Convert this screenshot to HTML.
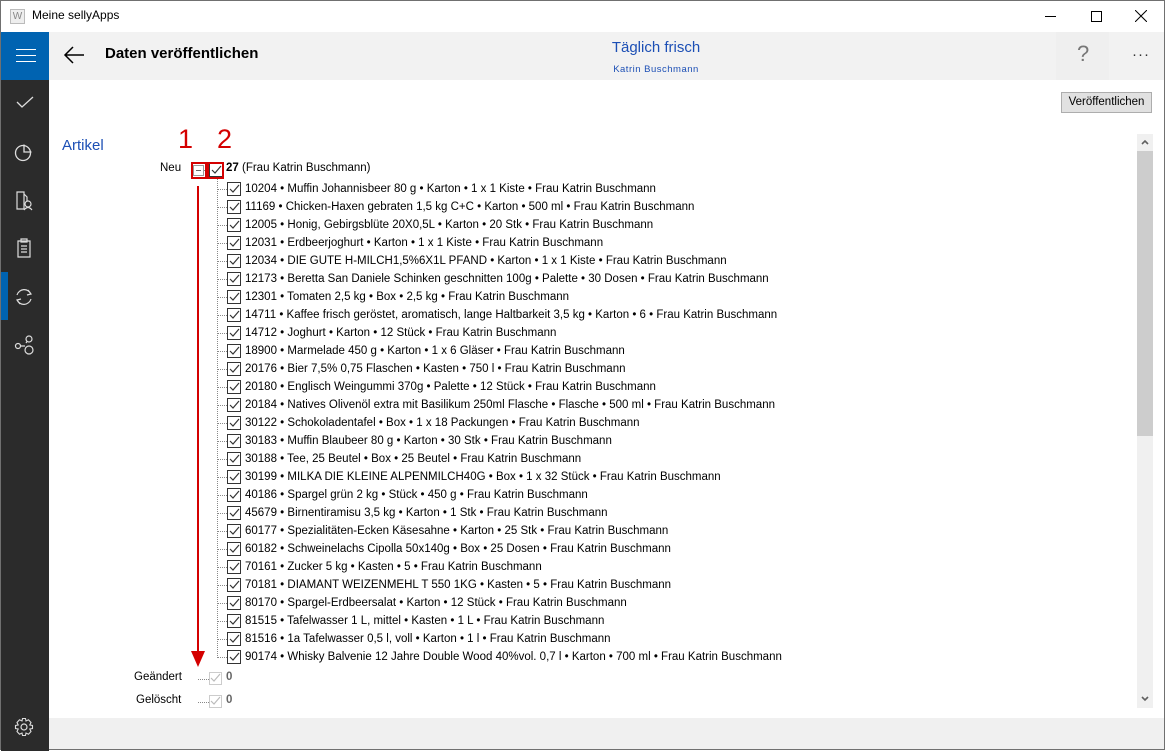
<!DOCTYPE html>
<html><head><meta charset="utf-8">
<style>
*{margin:0;padding:0;box-sizing:border-box}
body{width:1165px;height:750px;position:relative;overflow:hidden;background:#fff;font-family:"Segoe UI","Liberation Sans",sans-serif;border:1px solid #707070}
.a{position:absolute}
.row{position:absolute;left:226px;height:16px;font-size:11.5px;color:#000;white-space:nowrap;line-height:16px}
.cb{position:absolute;left:0;top:1px;width:14px;height:14px;border:1px solid #333;background:#fff}
.cb svg{position:absolute;left:1px;top:1px}
.row span{position:absolute;left:18px;top:0}
.hl{position:absolute;left:-10px;top:8px;width:10px;border-top:1px dotted #888}
</style></head><body>
<div class="a" style="left:0;top:0;width:1163px;height:31px;background:#fff"></div>
<div class="a" style="left:9px;top:8px;width:15px;height:15px;border:1px solid #bbb;background:#eee;font-size:10px;color:#888;text-align:center;line-height:13px">W</div>
<div class="a" style="left:31px;top:7px;font-size:12px;color:#000">Meine sellyApps</div>
<div class="a" style="left:1044px;top:15px;width:11px;border-top:1px solid #000"></div>
<div class="a" style="left:1090px;top:10px;width:11px;height:11px;border:1px solid #000"></div>
<svg class="a" style="left:1134px;top:9px" width="12" height="12"><path d="M0 0L12 12M12 0L0 12" stroke="#000" stroke-width="1"/></svg>
<div class="a" style="left:0;top:31px;width:48px;height:719px;background:#2b2b2b"></div>
<div class="a" style="left:0;top:31px;width:48px;height:48px;background:#0063b1"></div>
<div class="a" style="left:15px;top:48px;width:20px;height:1px;background:#fff;box-shadow:0 6px 0 #fff,0 12px 0 #fff"></div>
<div class="a" style="left:0;top:271px;width:7px;height:48px;background:#0063b1"></div>
<svg class="a" style="left:14px;top:93px" width="20" height="16"><path d="M2 8L7 13L18 3" stroke="#ddd" fill="none" stroke-width="1.3"/></svg>
<svg class="a" style="left:13px;top:142px" width="20" height="20"><circle cx="9" cy="10" r="7.5" stroke="#ddd" fill="none" stroke-width="1.3"/><path d="M10 1.5V9H17.5" stroke="#ddd" fill="none" stroke-width="1.3"/></svg>
<svg class="a" style="left:14px;top:190px" width="20" height="20"><path d="M2 1H9V18H2ZM9 3L12 6V10" stroke="#ddd" fill="none" stroke-width="1.2"/><circle cx="13" cy="13" r="3" stroke="#ddd" fill="none" stroke-width="1.2"/><path d="M9 19Q13 14 17 19" stroke="#ddd" fill="none" stroke-width="1.2"/></svg>
<svg class="a" style="left:14px;top:236px" width="20" height="22"><path d="M3 4H15V20H3ZM6 2H12V5H6ZM6 9H12M6 12H12M6 15H12" stroke="#ddd" fill="none" stroke-width="1.2"/></svg>
<svg class="a" style="left:12px;top:285px" width="22" height="22"><path d="M4 9A7.5 7.5 0 0 1 18 8M18 13A7.5 7.5 0 0 1 4 14M15 4L18 8L14 9M7 18L4 14L8 13" stroke="#ddd" fill="none" stroke-width="1.2"/></svg>
<svg class="a" style="left:12px;top:333px" width="24" height="22"><circle cx="5" cy="12" r="2.5" stroke="#ddd" fill="none" stroke-width="1.2"/><circle cx="16" cy="5" r="3" stroke="#ddd" fill="none" stroke-width="1.2"/><circle cx="16" cy="16" r="4" stroke="#ddd" fill="none" stroke-width="1.2"/><path d="M7.5 12H12M14 7.5L13 9" stroke="#ddd" stroke-width="1.2"/></svg>
<svg class="a" style="left:13px;top:716px" width="20" height="20"><circle cx="10" cy="10" r="3" stroke="#ddd" fill="none" stroke-width="1.2"/><path d="M8.5 1.5H11.5L12 4L14.5 2.8L17 5.5L15.8 8L18.5 8.5V11.5L15.8 12L17 14.5L14.5 17.2L12 16L11.5 18.5H8.5L8 16L5.5 17.2L3 14.5L4.2 12L1.5 11.5V8.5L4.2 8L3 5.5L5.5 2.8L8 4Z" stroke="#ddd" fill="none" stroke-width="1.1"/></svg>
<div class="a" style="left:48px;top:31px;width:1115px;height:48px;background:#f2f2f2"></div>
<div class="a" style="left:1055px;top:31px;width:53px;height:48px;background:#efefef"></div>
<svg class="a" style="left:62px;top:44px" width="22" height="20"><path d="M21 10H2M10 2L2 10L10 18" stroke="#000" fill="none" stroke-width="1.5"/></svg>
<div class="a" style="left:104px;top:44px;font-size:15px;font-weight:bold;color:#000">Daten veröffentlichen</div>
<div class="a" style="left:555px;top:38px;width:200px;text-align:center;font-size:15px;color:#1c4fb5">Täglich frisch</div>
<div class="a" style="left:555px;top:63px;width:200px;text-align:center;font-size:9.5px;color:#1c4fb5;letter-spacing:.5px">Katrin Buschmann</div>
<div class="a" style="left:1076px;top:40px;font-size:22px;color:#777;font-weight:300">?</div>
<div class="a" style="left:1131px;top:45px;font-size:15px;color:#333;letter-spacing:1px">···</div>
<div class="a" style="left:1060px;top:91px;width:91px;height:21px;background:#e1e1e1;border:1px solid #adadad;font-size:11.5px;text-align:center;line-height:19px">Veröffentlichen</div>
<div class="a" style="left:1136px;top:133px;width:16px;height:574px;background:#f0f0f0"></div>
<div class="a" style="left:1136px;top:150px;width:16px;height:285px;background:#cdcdcd"></div>
<svg class="a" style="left:1140px;top:138px" width="8" height="6"><path d="M1 5L4 2L7 5" stroke="#606060" fill="none" stroke-width="1.6"/></svg>
<svg class="a" style="left:1140px;top:695px" width="8" height="6"><path d="M1 1L4 4L7 1" stroke="#606060" fill="none" stroke-width="1.6"/></svg>
<div class="a" style="left:48px;top:717px;width:1115px;height:31px;background:#f0f0f0"></div>
<div class="a" style="left:61px;top:136px;font-size:15px;color:#1c4fb5">Artikel</div>
<div class="a" style="left:159px;top:161px;font-size:11.5px">Neu</div>
<div class="a" style="left:192px;top:164px;width:11px;height:11px;border:1px solid #999;background:#fff"></div>
<div class="a" style="left:195px;top:169px;width:5px;height:1px;background:#666"></div>
<div class="a" style="left:203px;top:169px;width:5px;border-top:1px dotted #888"></div>
<div class="a" style="left:208px;top:162px;width:14px;height:14px;border:1px solid #333"></div>
<svg class="a" style="left:210px;top:164px" width="11" height="10"><path d="M1 5L4 8L10 1" stroke="#333" fill="none" stroke-width="1.2"/></svg>
<div class="a" style="left:225px;top:161px;font-size:11.5px"><b>27</b> (Frau Katrin Buschmann)</div>
<div class="a" style="left:216px;top:177px;height:480px;border-left:1px dotted #888"></div>
<div class="row" style="top:180px"><i class="hl"></i><i class="cb"><svg width="11" height="10"><path d="M1 5L4 8L10 1" stroke="#333" fill="none" stroke-width="1.2"/></svg></i><span>10204 • Muffin Johannisbeer 80 g • Karton • 1 x 1 Kiste • Frau Katrin Buschmann</span></div>
<div class="row" style="top:198px"><i class="hl"></i><i class="cb"><svg width="11" height="10"><path d="M1 5L4 8L10 1" stroke="#333" fill="none" stroke-width="1.2"/></svg></i><span>11169 • Chicken-Haxen gebraten 1,5 kg C+C • Karton • 500 ml • Frau Katrin Buschmann</span></div>
<div class="row" style="top:216px"><i class="hl"></i><i class="cb"><svg width="11" height="10"><path d="M1 5L4 8L10 1" stroke="#333" fill="none" stroke-width="1.2"/></svg></i><span>12005 • Honig, Gebirgsblüte 20X0,5L • Karton • 20 Stk • Frau Katrin Buschmann</span></div>
<div class="row" style="top:234px"><i class="hl"></i><i class="cb"><svg width="11" height="10"><path d="M1 5L4 8L10 1" stroke="#333" fill="none" stroke-width="1.2"/></svg></i><span>12031 • Erdbeerjoghurt • Karton • 1 x 1 Kiste • Frau Katrin Buschmann</span></div>
<div class="row" style="top:252px"><i class="hl"></i><i class="cb"><svg width="11" height="10"><path d="M1 5L4 8L10 1" stroke="#333" fill="none" stroke-width="1.2"/></svg></i><span>12034 • DIE GUTE H-MILCH1,5%6X1L PFAND • Karton • 1 x 1 Kiste • Frau Katrin Buschmann</span></div>
<div class="row" style="top:270px"><i class="hl"></i><i class="cb"><svg width="11" height="10"><path d="M1 5L4 8L10 1" stroke="#333" fill="none" stroke-width="1.2"/></svg></i><span>12173 • Beretta San Daniele Schinken geschnitten 100g • Palette • 30 Dosen • Frau Katrin Buschmann</span></div>
<div class="row" style="top:288px"><i class="hl"></i><i class="cb"><svg width="11" height="10"><path d="M1 5L4 8L10 1" stroke="#333" fill="none" stroke-width="1.2"/></svg></i><span>12301 • Tomaten 2,5 kg • Box • 2,5 kg • Frau Katrin Buschmann</span></div>
<div class="row" style="top:306px"><i class="hl"></i><i class="cb"><svg width="11" height="10"><path d="M1 5L4 8L10 1" stroke="#333" fill="none" stroke-width="1.2"/></svg></i><span>14711 • Kaffee frisch geröstet, aromatisch, lange Haltbarkeit 3,5 kg • Karton • 6 • Frau Katrin Buschmann</span></div>
<div class="row" style="top:324px"><i class="hl"></i><i class="cb"><svg width="11" height="10"><path d="M1 5L4 8L10 1" stroke="#333" fill="none" stroke-width="1.2"/></svg></i><span>14712 • Joghurt • Karton • 12 Stück • Frau Katrin Buschmann</span></div>
<div class="row" style="top:342px"><i class="hl"></i><i class="cb"><svg width="11" height="10"><path d="M1 5L4 8L10 1" stroke="#333" fill="none" stroke-width="1.2"/></svg></i><span>18900 • Marmelade 450 g • Karton • 1 x 6 Gläser • Frau Katrin Buschmann</span></div>
<div class="row" style="top:360px"><i class="hl"></i><i class="cb"><svg width="11" height="10"><path d="M1 5L4 8L10 1" stroke="#333" fill="none" stroke-width="1.2"/></svg></i><span>20176 • Bier 7,5% 0,75 Flaschen • Kasten • 750 l • Frau Katrin Buschmann</span></div>
<div class="row" style="top:378px"><i class="hl"></i><i class="cb"><svg width="11" height="10"><path d="M1 5L4 8L10 1" stroke="#333" fill="none" stroke-width="1.2"/></svg></i><span>20180 • Englisch Weingummi 370g • Palette • 12 Stück • Frau Katrin Buschmann</span></div>
<div class="row" style="top:396px"><i class="hl"></i><i class="cb"><svg width="11" height="10"><path d="M1 5L4 8L10 1" stroke="#333" fill="none" stroke-width="1.2"/></svg></i><span>20184 • Natives Olivenöl extra mit Basilikum 250ml Flasche • Flasche • 500 ml • Frau Katrin Buschmann</span></div>
<div class="row" style="top:414px"><i class="hl"></i><i class="cb"><svg width="11" height="10"><path d="M1 5L4 8L10 1" stroke="#333" fill="none" stroke-width="1.2"/></svg></i><span>30122 • Schokoladentafel • Box • 1 x 18 Packungen • Frau Katrin Buschmann</span></div>
<div class="row" style="top:432px"><i class="hl"></i><i class="cb"><svg width="11" height="10"><path d="M1 5L4 8L10 1" stroke="#333" fill="none" stroke-width="1.2"/></svg></i><span>30183 • Muffin Blaubeer 80 g • Karton • 30 Stk • Frau Katrin Buschmann</span></div>
<div class="row" style="top:450px"><i class="hl"></i><i class="cb"><svg width="11" height="10"><path d="M1 5L4 8L10 1" stroke="#333" fill="none" stroke-width="1.2"/></svg></i><span>30188 • Tee, 25 Beutel • Box • 25 Beutel • Frau Katrin Buschmann</span></div>
<div class="row" style="top:468px"><i class="hl"></i><i class="cb"><svg width="11" height="10"><path d="M1 5L4 8L10 1" stroke="#333" fill="none" stroke-width="1.2"/></svg></i><span>30199 • MILKA DIE KLEINE ALPENMILCH40G • Box • 1 x 32 Stück • Frau Katrin Buschmann</span></div>
<div class="row" style="top:486px"><i class="hl"></i><i class="cb"><svg width="11" height="10"><path d="M1 5L4 8L10 1" stroke="#333" fill="none" stroke-width="1.2"/></svg></i><span>40186 • Spargel grün 2 kg • Stück • 450 g • Frau Katrin Buschmann</span></div>
<div class="row" style="top:504px"><i class="hl"></i><i class="cb"><svg width="11" height="10"><path d="M1 5L4 8L10 1" stroke="#333" fill="none" stroke-width="1.2"/></svg></i><span>45679 • Birnentiramisu 3,5 kg • Karton • 1 Stk • Frau Katrin Buschmann</span></div>
<div class="row" style="top:522px"><i class="hl"></i><i class="cb"><svg width="11" height="10"><path d="M1 5L4 8L10 1" stroke="#333" fill="none" stroke-width="1.2"/></svg></i><span>60177 • Spezialitäten-Ecken Käsesahne • Karton • 25 Stk • Frau Katrin Buschmann</span></div>
<div class="row" style="top:540px"><i class="hl"></i><i class="cb"><svg width="11" height="10"><path d="M1 5L4 8L10 1" stroke="#333" fill="none" stroke-width="1.2"/></svg></i><span>60182 • Schweinelachs Cipolla 50x140g • Box • 25 Dosen • Frau Katrin Buschmann</span></div>
<div class="row" style="top:558px"><i class="hl"></i><i class="cb"><svg width="11" height="10"><path d="M1 5L4 8L10 1" stroke="#333" fill="none" stroke-width="1.2"/></svg></i><span>70161 • Zucker 5 kg • Kasten • 5 • Frau Katrin Buschmann</span></div>
<div class="row" style="top:576px"><i class="hl"></i><i class="cb"><svg width="11" height="10"><path d="M1 5L4 8L10 1" stroke="#333" fill="none" stroke-width="1.2"/></svg></i><span>70181 • DIAMANT WEIZENMEHL T 550 1KG • Kasten • 5 • Frau Katrin Buschmann</span></div>
<div class="row" style="top:594px"><i class="hl"></i><i class="cb"><svg width="11" height="10"><path d="M1 5L4 8L10 1" stroke="#333" fill="none" stroke-width="1.2"/></svg></i><span>80170 • Spargel-Erdbeersalat • Karton • 12 Stück • Frau Katrin Buschmann</span></div>
<div class="row" style="top:612px"><i class="hl"></i><i class="cb"><svg width="11" height="10"><path d="M1 5L4 8L10 1" stroke="#333" fill="none" stroke-width="1.2"/></svg></i><span>81515 • Tafelwasser 1 L, mittel • Kasten • 1 L • Frau Katrin Buschmann</span></div>
<div class="row" style="top:630px"><i class="hl"></i><i class="cb"><svg width="11" height="10"><path d="M1 5L4 8L10 1" stroke="#333" fill="none" stroke-width="1.2"/></svg></i><span>81516 • 1a Tafelwasser 0,5 l, voll • Karton • 1 l • Frau Katrin Buschmann</span></div>
<div class="row" style="top:648px"><i class="hl"></i><i class="cb"><svg width="11" height="10"><path d="M1 5L4 8L10 1" stroke="#333" fill="none" stroke-width="1.2"/></svg></i><span>90174 • Whisky Balvenie 12 Jahre Double Wood 40%vol. 0,7 l • Karton • 700 ml • Frau Katrin Buschmann</span></div>
<div class="a" style="left:133px;top:670px;font-size:11.5px">Geändert</div>
<div class="a" style="left:197px;top:678px;width:11px;border-top:1px dotted #888"></div>
<div class="a" style="left:208px;top:671px;width:13px;height:13px;border:1px solid #ccc"></div>
<svg class="a" style="left:209px;top:672px" width="11" height="10"><path d="M1 5L4 8L10 1" stroke="#bbb" fill="none" stroke-width="1.2"/></svg>
<div class="a" style="left:225px;top:670px;font-size:11.5px;font-weight:bold;color:#666">0</div>
<div class="a" style="left:135px;top:693px;font-size:11.5px">Gelöscht</div>
<div class="a" style="left:197px;top:701px;width:11px;border-top:1px dotted #888"></div>
<div class="a" style="left:208px;top:694px;width:13px;height:13px;border:1px solid #ccc"></div>
<svg class="a" style="left:209px;top:695px" width="11" height="10"><path d="M1 5L4 8L10 1" stroke="#bbb" fill="none" stroke-width="1.2"/></svg>
<div class="a" style="left:225px;top:693px;font-size:11.5px;font-weight:bold;color:#666">0</div>
<div class="a" style="left:190px;top:161px;width:16px;height:17px;border:2px solid #d40000"></div>
<div class="a" style="left:206px;top:161px;width:17px;height:17px;border:2px solid #d40000"></div>
<div class="a" style="left:177px;top:123px;font-size:27px;color:#d40000;font-family:'Liberation Sans',sans-serif">1</div>
<div class="a" style="left:216px;top:123px;font-size:27px;color:#d40000;font-family:'Liberation Sans',sans-serif">2</div>
<div class="a" style="left:196px;top:185px;width:2px;height:468px;background:#d40000"></div>
<svg class="a" style="left:190px;top:650px" width="14" height="16"><path d="M0 0L14 0L7 16Z" fill="#d40000"/></svg>
</body></html>
